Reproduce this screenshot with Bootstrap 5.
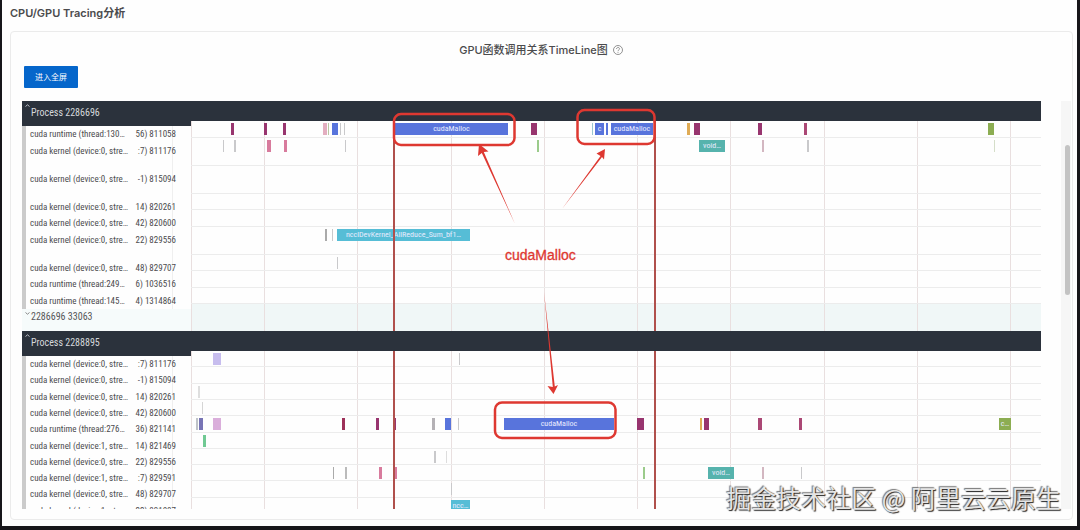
<!DOCTYPE html>
<html lang="zh-CN">
<head>
<meta charset="utf-8">
<meta name="viewport" content="width=device-width, initial-scale=1">
<title>CPU/GPU Tracing分析</title>
<link href="https://cdn.jsdelivr.net/npm/bootstrap@5.3.0/dist/css/bootstrap.min.css" rel="stylesheet">
<style>
body { background: #fefefe; font-family: Inter, "Noto Sans CJK SC", sans-serif; color: #4b4b4d; }
.app-frame { border: solid #17161a; border-width: 0 3px 5px 2px; min-height: 100vh; padding: 4px 4px 6px 8px; }
.page-title { font-size: 11px; line-height: 18px; font-weight: 600; margin-bottom: 9px; }
.panel { border: 1px solid #ebebeb; border-radius: 4px; padding: 9px 1px 10px 13px; }
.panel-title { font-size: 11px; line-height: 18px; font-weight: 500; margin-bottom: 7px; padding-right: 12px; }
.btn-full { background: #0566cb; color: #fff; font-size: 8px; line-height: 12px; padding: 5px 11px; border-radius: 1px; border: 0; }
.btn-full:hover { background: #0455aa; color: #fff; }
.trace-wrap { margin-top: 13px; gap: 20px; }
.trace { height: 408px; overflow: hidden; font-family: "Roboto Condensed", "Liberation Sans Narrow", Roboto, sans-serif; margin-left: -2px; }
.names { width: 169px; }
.group-head { background: #2b323c; color: #d5d8db; height: 25px; font-size: 10px; line-height: 24px; padding-left: 9px; }
.group-bar { background: #2b323c; height: 20px; }
.chevron { width: 5px; height: 3px; top: 3px; left: 3px; }
.name-list { border-left: 4px solid #cbcbcb; padding-left: 4px; padding-right: 15px; color: #4c4c4e; font-size: 9px; line-height: 16px; white-space: pre; background: linear-gradient(#efefef, #efefef) 146px 0 / 1px 100% no-repeat; }
.summary-name { height: 22px; font-size: 10px; line-height: 16px; padding-left: 9px; color: #58585a; background: #f6fbfb; }
.summary-lane { height: 27px; background: rgba(210, 232, 232, .3); }
.lane { border-bottom: 1px solid #ececec; }
.h-a { height: 16px; } .h-b { height: 17px; } .h-c { height: 28px; }
.ev { position: absolute; top: 2px; height: 12px; font-size: 8px; line-height: 12px; color: #e8ecff; text-align: center; overflow: hidden; white-space: nowrap; }
.tick { position: absolute; top: 0; bottom: 0; width: 1px; background: #e9dfdf; }
.bound { position: absolute; top: 0; bottom: 0; width: 2px; background: #b0504c; }
.rail { width: 10px; background: #f6f6f6; padding: 44px 2px 0 4px; }
.thumb { width: 5px; height: 150px; border-radius: 3px; background: #c3c3c3; }
.notes { inset: 0; width: 100%; height: 100%; pointer-events: none; z-index: 3; }
.stamp { right: 16px; bottom: 11px; z-index: 4; font: 25px/36px "Noto Sans CJK SC", sans-serif; color: #e4e4e4; text-shadow: 1px 1px 1px #222, -1px -1px 1px #777; white-space: nowrap; }
</style>
</head>
<body>
<main class="app-frame position-relative">
  <h1 class="page-title">CPU/GPU Tracing分析</h1>
  <section class="panel">
    <h2 class="panel-title d-flex justify-content-center align-items-center gap-1"><span>GPU函数调用关系TimeLine图</span>
      <svg width="12" height="12" viewBox="0 0 12 12" fill="none" stroke="#777" stroke-width=".8" aria-hidden="true"><circle cx="6" cy="6" r="4.5"/><path d="M4.5 5c0-2 3-2 3-.2C7.500 6 6 5.900 6 7.200M6 8v.8"/></svg>
    </h2>
    <button type="button" class="btn btn-full d-block">进入全屏</button>
    <div class="trace-wrap d-flex">
      <div class="trace flex-grow-1 position-relative" id="trace">
        <svg class="notes position-absolute" viewBox="0 0 1019 408">
          <g fill="none" stroke="#de3831" stroke-width="2.500">
            <rect x="372" y="13" width="120.500" height="31" rx="7"/>
            <rect x="555.500" y="9" width="77" height="34" rx="7"/>
            <rect x="473" y="301.500" width="120.500" height="35.500" rx="7"/>
          </g>
          <g fill="#de3831">
            <path d="M493 123 459.800 52 456 55 457 43 466.500 50.500 461.800 51z"/>
            <path d="M540 108 578.500 55 574.500 52.500 583 48 582 58.500 580 56z"/>
            <path d="M522 191 530.800 286 525.500 285 531.500 293 536 284 532.800 285.500z"/>
          </g>
          <text x="483" y="159" font-family="Liberation Sans, sans-serif" font-size="14" fill="#de3831" stroke="#de3831" stroke-width=".3">cudaMalloc</text>
        </svg>
      </div>
      <div class="rail"><div class="thumb"></div></div>
    </div>
  </section>
  <div class="stamp position-absolute">掘金技术社区 @ 阿里云云原生</div>
</main>
<script src="https://cdn.jsdelivr.net/npm/bootstrap@5.3.0/dist/js/bootstrap.bundle.min.js"></script>
<script>
// Each row: left label, right label, height class, events [start, duration, colour, caption]
const SPAN = 850;
const K = 'cuda kernel (device:0, stre…', K1 = 'cuda kernel (device:1, stre…';
const plum = '#98356f', blue = '#5874dc', grey = '#c9c9cb', pink = '#d87b9d', teal = '#56b3ad', sky = '#56bdd6', lime = '#8cad52';
const groups = [
  { title: 'Process 2286696', summary: '2286696 33063', rows: [
    ['cuda runtime (thread:130…', '56) 811058', 'h-b', [[40,3,plum],[73,3,plum],[91.5,3,plum],[132,4,'#e3aec0'],[137,1,'#b9c7a2'],[141,6,blue],[149,1,grey],[153,1,grey],[204,113,blue,'cudaMalloc'],[340,6,plum],[401,1,'#9bc6cf'],[404,9,blue,'c'],[415,2,blue],[420,42,blue,'cudaMalloc'],[496,3,'#dfab55'],[503,6,plum],[567,4,plum],[613,3,'#ab4875'],[797,6,lime]]],
    [K, ':7) 811176', 'h-c', [[32,1,grey],[43,2,grey],[76,4,pink],[93,3,pink],[154,1,grey],[346,2,'#9bcb8b'],[508,26,teal,'void…'],[571,2,'#d3b7c1'],[616,2,grey],[803,1,'#d5dec9']]],
    [K, '-1) 815094', 'h-c', []],
    [K, '14) 820261', 'h-a', []],
    [K, '42) 820600', 'h-b', []],
    [K, '22) 829556', 'h-c', [[134,2,'#aaa'],[141,1,grey],[146,133,sky,'ncclDevKernel_AllReduce_Sum_bf1…']]],
    [K, '48) 829707', 'h-a', [[146,1,grey]]],
    ['cuda runtime (thread:249…', '6) 1036516', 'h-b', []],
    ['cuda runtime (thread:145…', '4) 1314864', 'h-a', []]] },
  { title: 'Process 2288895', rows: [
    [K, ':7) 811176', 'h-a', [[22,8,'#c7bdee'],[268,1,grey]]],
    [K, '-1) 815094', 'h-b', []],
    [K, '14) 820261', 'h-a', [[7,2,'#dedede']]],
    [K, '42) 820600', 'h-a', [[11,1,'#d5d5d5']]],
    ['cuda runtime (thread:276…', '36) 821141', 'h-b', [[5,2,'#bfc3c8'],[8,4,'#7774b5'],[22,8,'#daaedb'],[151,3,'#9d3159'],[185,3,plum],[203,2,plum],[241,3,'#b4b1b5'],[254,6,blue],[267,1,grey],[313,110,blue,'cudaMalloc'],[446,7,plum],[509,2,'#dfab55'],[513,5,plum],[567,4,'#ab4875'],[608,3,'#ab4875'],[808,12,lime,'c…']]],
    [K1, '14) 821469', 'h-a', [[12,3,'#70c993']]],
    [K, '22) 829556', 'h-a', [[243,2,grey],[255,1,'#ddd']]],
    [K1, ':7) 829591', 'h-a', [[142,1,'#aaa'],[154,2,'#bbb'],[188,3,pink],[204,2,pink],[452,2,'#9bcb8b'],[517,26,teal,'void…'],[571,2,'#d3b7c1'],[610,1,grey]]],
    [K, '48) 829707', 'h-b', [[260,1,grey]]],
    [K1, '22) 831087', 'h-b', [[260,19,sky,'ncc…']]]] }
];
const pct = v => (v / SPAN * 100).toFixed(3) + '%';
const chevron = '<svg class="chevron position-absolute" viewBox="0 0 5 3" fill="none" stroke="#b9bdc2"><path d="M.5 2.500 2.500.8l2 1.700"/></svg>';
const foldMark = '<svg class="chevron position-absolute" viewBox="0 0 5 3" fill="none" stroke="#888"><path d="M.5.5l2 1.700 2-1.700"/></svg>';
const ticks = [0,73,166,260,353,446,539,633,726,819].map(x => `<i class="tick" style="left:${pct(x)}"></i>`).join('');
const bounds = [202,463].map(x => `<i class="bound" style="left:${pct(x)}"></i>`).join('');
document.getElementById('trace').insertAdjacentHTML('afterbegin', groups.map(g => `
  <div class="d-flex">
    <div class="names flex-shrink-0">
      <div class="group-head position-relative">${chevron}${g.title}</div>
      <div class="name-list">${g.rows.map(r => `<div class="d-flex justify-content-between ${r[2]}"><span>${r[0]}</span><span>${r[1]}</span></div>`).join('')}</div>
      ${g.summary ? `<div class="summary-name position-relative">${foldMark}${g.summary}</div>` : ''}
    </div>
    <div class="flex-grow-1">
      <div class="group-bar"></div>
      <div class="lanes position-relative">${ticks}
        ${g.rows.map(r => `<div class="lane position-relative ${r[2]}">${r[3].map(e => `<div class="ev" style="left:${pct(e[0])};width:${pct(e[1])};background:${e[2]}">${e[3] || ''}</div>`).join('')}</div>`).join('')}
        ${g.summary ? '<div class="summary-lane"></div>' : ''}${bounds}
      </div>
    </div>
  </div>`).join(''));
</script>
</body>
</html>
